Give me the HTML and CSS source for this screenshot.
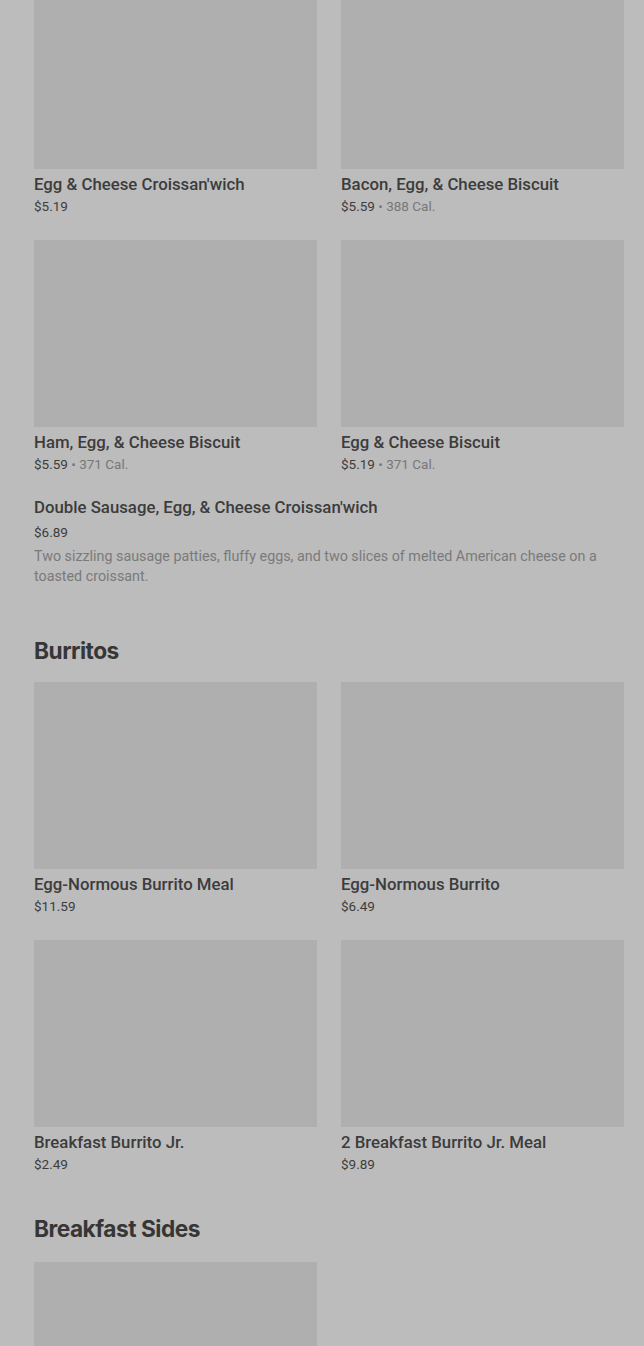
FILE: index.html
```html
<!DOCTYPE html>
<html>
<head>
	<meta charset="UTF-8">
	<title>Breakfast menu</title>
	<link rel="stylesheet" href="styles.css">
</head>
<body>
	<div class="menu">
	<!-- croissan'wich & biscuits -->
		<div class="grid first">
			<div class="item">
				<div class="pic"></div>
				<div class="name">Egg &amp; Cheese Croissan'wich</div>
				<div class="price">$5.19</div>
			</div>
			<div class="item">
				<div class="pic"></div>
				<div class="name">Bacon, Egg, &amp; Cheese Biscuit</div>
				<div class="price">$5.59 <span class="cal">• 388 Cal.</span></div>
			</div>
			<div class="item">
				<div class="pic"></div>
				<div class="name">Ham, Egg, &amp; Cheese Biscuit</div>
				<div class="price">$5.59 <span class="cal">• 371 Cal.</span></div>
			</div>
			<div class="item">
				<div class="pic"></div>
				<div class="name">Egg &amp; Cheese Biscuit</div>
				<div class="price">$5.19 <span class="cal">• 371 Cal.</span></div>
			</div>
		</div>
		<div class="plain">
			<div class="name">Double Sausage, Egg, &amp; Cheese Croissan'wich</div>
			<div class="price">$6.89</div>
			<p class="desc">Two sizzling sausage patties, fluffy eggs, and two slices of melted American cheese on a toasted croissant.</p>
		</div>

		<h2>Burritos</h2>
		<div class="grid">
			<div class="item">
				<div class="pic"></div>
				<div class="name">Egg-Normous Burrito Meal</div>
				<div class="price">$11.59</div>
			</div>
			<div class="item">
				<div class="pic"></div>
				<div class="name">Egg-Normous Burrito</div>
				<div class="price">$6.49</div>
			</div>
			<div class="item">
				<div class="pic"></div>
				<div class="name">Breakfast Burrito Jr.</div>
				<div class="price">$2.49</div>
			</div>
			<div class="item">
				<div class="pic"></div>
				<div class="name">2 Breakfast Burrito Jr. Meal</div>
				<div class="price">$9.89</div>
			</div>
		</div>

		<h2 class="sides">Breakfast Sides</h2>
		<div class="grid">
			<div class="item">
				<div class="pic"></div>
			</div>
		</div>
	</div>
</body>
</html>
```

FILE: styles.css
```css
html,body{margin:0;padding:0;background:#bcbcbc;overflow:hidden;}
body{font-family:Roboto,"Liberation Sans",sans-serif;color:#3a3a3a;}
.menu{padding:0 20px 0 34px;}
.grid{display:grid;grid-template-columns:283px 283px;column-gap:24px;row-gap:25px;}
.grid.first{margin-top:-18px;}
.pic{height:187px;background:#afafaf;}
.name{margin-top:5px;font-size:16.8px;line-height:20px;font-weight:500;color:#3c3c3c;}
.price{margin-top:3px;font-size:13.5px;line-height:18px;color:#3d3d3d;}
.cal{color:#787878;}
.plain{margin-top:24px;}
.plain .price{margin-top:6px;}
.desc{margin:5px 0 0;font-size:14.3px;line-height:20px;color:#7a7a7a;width:590px;}
h2{margin:49px 0 15px;font-family:Inter,"Liberation Sans",sans-serif;font-size:22.7px;line-height:32px;font-weight:700;letter-spacing:-0.5px;color:#363636;}
h2.sides{margin:40px 0 17px;}
```
